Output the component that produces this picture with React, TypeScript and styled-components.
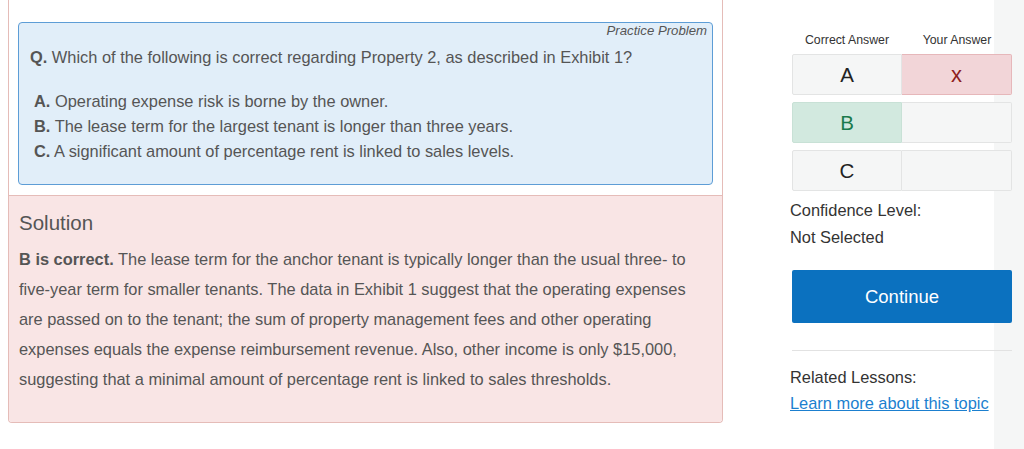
import React from "react";
import styled, { createGlobalStyle } from "styled-components";

const GlobalStyle = createGlobalStyle`
  html, body {
    margin: 0;
    padding: 0;
    background: #ffffff;
  }
  body {
    font-family: "Liberation Sans", Arial, Helvetica, sans-serif;
  }
`;

const Page = styled.div`
  min-height: 100vh;
  display: flex;
  align-items: flex-start;
  background: linear-gradient(to right, #ffffff 994px, #f5f6f6 994px);
  box-sizing: border-box;
`;

const LeftColumn = styled.div`
  margin-left: 8px;
  width: 715px;
  flex: none;
`;

const Panel = styled.div`
  border: 1px solid #e5bcb8;
  border-top: none;
  border-radius: 0 0 4px 4px;
  overflow: hidden;
  background: #ffffff;
`;

const QuestionArea = styled.div`
  padding: 22px 9px 10px 9px;
`;

const QuestionBox = styled.div`
  background: #e1eef9;
  border: 1px solid #5d9dd6;
  border-radius: 4px;
  padding: 0 5px 19px 11px;
  height: 163px;
  box-sizing: border-box;
  color: #555555;
`;

const Tag = styled.div`
  text-align: right;
  font-size: 13.2px;
  font-style: italic;
  line-height: 16px;
  color: #555555;
`;

const QuestionText = styled.p`
  margin: 6px 0 0 0;
  font-size: 16.4px;
  line-height: 24px;
`;

const Options = styled.ul`
  list-style: none;
  margin: 20px 0 0 0;
  padding: 0 0 0 4px;
`;

const Option = styled.li`
  font-size: 16.4px;
  line-height: 25px;
`;

const Solution = styled.div`
  background: #f9e5e5;
  border-top: 1px solid #e5bcb8;
  padding: 16px 10px 28px 10px;
  color: #555555;
`;

const SolutionTitle = styled.h3`
  margin: 0;
  font-size: 20.5px;
  font-weight: normal;
  line-height: 22px;
`;

const SolutionBody = styled.p`
  margin: 10px 0 0 0;
  font-size: 16.4px;
  line-height: 30px;
`;

const RightColumn = styled.div`
  margin-left: 67px;
  width: 222px;
  flex: none;
  padding-top: 33px;
  color: #333333;
`;

const HeaderRow = styled.div`
  display: grid;
  grid-template-columns: 110px 110px;
  margin-left: 2px;
`;

const HeaderCell = styled.div`
  text-align: center;
  font-size: 12.3px;
  line-height: 14px;
  color: #333333;
`;

const AnswerGrid = styled.div`
  margin: 7px 0 0 2px;
  display: flex;
  flex-direction: column;
  gap: 7px;
`;

const AnswerRow = styled.div`
  display: grid;
  grid-template-columns: 110px 110px;
  height: 41px;
`;

type Tone = "plain" | "wrong" | "right";

const toneBg: Record<Tone, string> = {
  plain: "#f5f6f6",
  wrong: "#f2d5d8",
  right: "#d2e9df",
};
const toneBorder: Record<Tone, string> = {
  plain: "#e3e4e4",
  wrong: "#e6b7ba",
  right: "#c8e1d6",
};
const toneColor: Record<Tone, string> = {
  plain: "#222222",
  wrong: "#8e1d1d",
  right: "#1b7a4c",
};

const AnswerCell = styled.div<{ $tone: Tone; $side: "left" | "right" }>`
  display: flex;
  align-items: center;
  justify-content: center;
  background: ${(p) => toneBg[p.$tone]};
  border: 1px solid ${(p) => toneBorder[p.$tone]};
  border-left-width: ${(p) => (p.$side === "right" ? "0" : "1px")};
  border-radius: ${(p) => (p.$side === "left" ? "2px 0 0 2px" : "0 2px 2px 0")};
  color: ${(p) => toneColor[p.$tone]};
  font-size: 20.5px;
  box-sizing: border-box;
`;

const Mark = styled.span`
  font-size: 22px;
  line-height: 1;
`;

const InfoLine = styled.div<{ $gap?: number }>`
  font-size: 16.4px;
  line-height: 22px;
  margin-top: ${(p) => p.$gap ?? 0}px;
  color: #333333;
`;

const ContinueButton = styled.button`
  display: block;
  margin: 22px 0 0 2px;
  width: 220px;
  height: 53px;
  border: none;
  border-radius: 2px;
  background: #0b71bf;
  color: #ffffff;
  font-family: "Liberation Sans", Arial, Helvetica, sans-serif;
  font-size: 18.5px;
  cursor: pointer;
`;

const Divider = styled.hr`
  margin: 27px 0 0 2px;
  width: 220px;
  border: none;
  border-top: 1px solid #e2e2e2;
  height: 0;
`;

const LessonLink = styled.a`
  display: inline-block;
  margin-top: 4px;
  font-size: 16.4px;
  line-height: 22px;
  color: #1b7fcf;
  text-decoration: underline;
`;

const answers: { letter: string; correct: Tone; yours: Tone; mark?: string }[] = [
  { letter: "A", correct: "plain", yours: "wrong", mark: "x" },
  { letter: "B", correct: "right", yours: "plain" },
  { letter: "C", correct: "plain", yours: "plain" },
];

export default function App() {
  return (
    <>
      <GlobalStyle />
      <Page>
        <LeftColumn>
          <Panel>
            <QuestionArea>
              <QuestionBox>
                <Tag>Practice Problem</Tag>
                <QuestionText>
                  <b>Q.</b> Which of the following is correct regarding Property 2, as described in Exhibit 1?
                </QuestionText>
                <Options>
                  <Option>
                    <b>A.</b> Operating expense risk is borne by the owner.
                  </Option>
                  <Option>
                    <b>B.</b> The lease term for the largest tenant is longer than three years.
                  </Option>
                  <Option>
                    <b>C.</b> A significant amount of percentage rent is linked to sales levels.
                  </Option>
                </Options>
              </QuestionBox>
            </QuestionArea>
            <Solution>
              <SolutionTitle>Solution</SolutionTitle>
              <SolutionBody>
                <b>B is correct.</b> The lease term for the anchor tenant is typically longer than the usual three- to
                five-year term for smaller tenants. The data in Exhibit 1 suggest that the operating expenses are passed
                on to the tenant; the sum of property management fees and other operating expenses equals the expense
                reimbursement revenue. Also, other income is only $15,000, suggesting that a minimal amount of
                percentage rent is linked to sales thresholds.
              </SolutionBody>
            </Solution>
          </Panel>
        </LeftColumn>
        <RightColumn>
          <HeaderRow>
            <HeaderCell>Correct Answer</HeaderCell>
            <HeaderCell>Your Answer</HeaderCell>
          </HeaderRow>
          <AnswerGrid>
            {answers.map((a) => (
              <AnswerRow key={a.letter}>
                <AnswerCell $tone={a.correct} $side="left">
                  {a.letter}
                </AnswerCell>
                <AnswerCell $tone={a.yours} $side="right">
                  {a.mark ? <Mark>{a.mark}</Mark> : null}
                </AnswerCell>
              </AnswerRow>
            ))}
          </AnswerGrid>
          <InfoLine $gap={8}>Confidence Level:</InfoLine>
          <InfoLine $gap={5}>Not Selected</InfoLine>
          <ContinueButton>Continue</ContinueButton>
          <Divider />
          <InfoLine $gap={15}>Related Lessons:</InfoLine>
          <LessonLink href="#">Learn more about this topic</LessonLink>
        </RightColumn>
      </Page>
    </>
  );
}
